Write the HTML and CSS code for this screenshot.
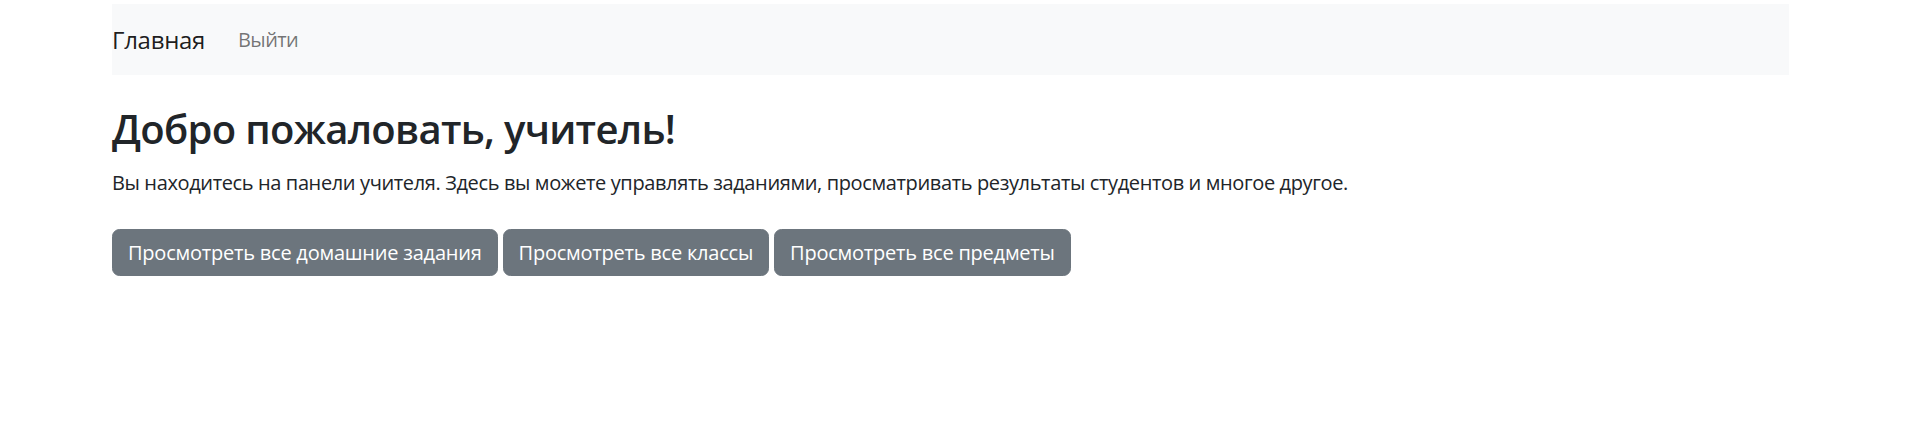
FILE: index.html
```html
<!DOCTYPE html>
<html lang="ru">
<head>
<meta charset="utf-8">
<title>Панель учителя</title>
<link rel="stylesheet" href="styles.css">
</head>
<body>
<nav class="navbar">
  <a class="brand" href="#">Главная</a>
  <a class="nav-link" href="#">Выйти</a>
</nav>
<main class="content">
  <h1 class="title">Добро пожаловать, учитель!</h1>
  <p class="lead-text">Вы находитесь на панели учителя. Здесь вы можете управлять заданиями, просматривать результаты студентов и многое другое.</p>
  <div class="actions">
    <a class="btn" href="#">Просмотреть все домашние задания</a>
    <a class="btn" href="#">Просмотреть все классы</a>
    <a class="btn" href="#">Просмотреть все предметы</a>
  </div>
</main>
</body>
</html>
```
FILE: styles.css
```css
* { box-sizing: border-box; }
html, body { margin: 0; padding: 0; background: #fff; }
body {
  font-family: "Open Sans", "Noto Sans", "Liberation Sans", sans-serif;
  font-size: 20px;
  line-height: 1.5;
  color: #212529;
  letter-spacing: -0.3px;
}
a { text-decoration: none; }
.navbar {
  margin: 4px 0 0 112px;
  width: 1677px;
  height: 71px;
  background: #f8f9fa;
  display: flex;
  align-items: center;
  gap: 33px;
}
.brand {
  font-size: 24px;
  line-height: 36px;
  color: rgba(0,0,0,.9);
}
.nav-link {
  font-size: 20px;
  line-height: 30px;
  letter-spacing: -0.6px;
  color: rgba(0,0,0,.55);
}
.content {
  margin-left: 112px;
  padding-top: 30px;
}
.title {
  margin: 0 0 15px;
  font-size: 40px;
  line-height: 48px;
  font-weight: 600;
  letter-spacing: -0.7px;
}
.lead-text {
  margin: 0 0 31px;
  font-size: 20px;
  line-height: 30px;
  letter-spacing: -0.37px;
}
.actions {
  display: flex;
  gap: 5px;
}
.btn {
  display: inline-block;
  background: #6c757d;
  color: #fff;
  border-radius: 7.5px;
  padding: 7.5px 15px;
  font-size: 20px;
  line-height: 30px;
  letter-spacing: -0.22px;
  border: 1.25px solid #6c757d;
}
```
